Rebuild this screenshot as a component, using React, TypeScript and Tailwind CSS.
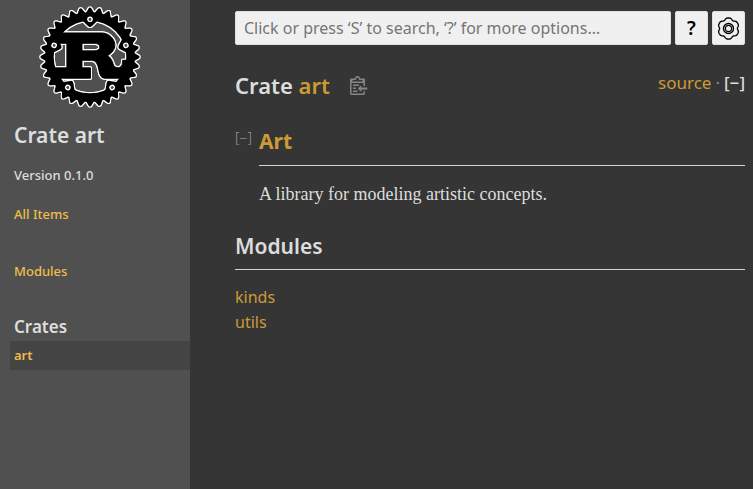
import React from "react";

const COG_ANGLES = Array.from({ length: 32 }, (_, i) => i * 11.25);
const MOUNT_ANGLES = [0, 72, 144, 216, 288];

function RustLogo() {
  return (
    <svg
      viewBox="0 0 106 106"
      role="img"
      aria-label="logo"
      className="block size-[100px] overflow-visible [filter:drop-shadow(1px_0_0_#fff)_drop-shadow(0_1px_0_#fff)_drop-shadow(-1px_0_0_#fff)_drop-shadow(0_-1px_0_#fff)]"
    >
      <mask id="holes" maskUnits="userSpaceOnUse" x="-60" y="-60" width="120" height="120">
        <rect x="-60" y="-60" width="120" height="120" fill="white" />
        {MOUNT_ANGLES.map((a) => (
          <circle key={a} cy="-40" r="3" transform={`rotate(${a})`} />
        ))}
      </mask>
      <g transform="translate(53 53)" stroke="black" strokeLinejoin="round">
        <path
          transform="translate(0.5 0.5)"
          d="M-9-15H4C12-15 12-7 4-7H-9ZM-40 22H0V11H-9V3H1C12 3 6 22 15 22H40V3H34V5C34 13 25 12 24 7C23 2 19-2 18-2C33-10 24-26 12-26H-35V-15H-25V11H-40Z"
        />
        <g mask="url(#holes)">
          <circle r="43" fill="none" strokeWidth="9" />
          {COG_ANGLES.map((a) => (
            <polygon key={a} strokeWidth="3" points="46,3 51,0 46,-3" transform={`rotate(${a})`} />
          ))}
          {MOUNT_ANGLES.map((a) => (
            <polygon key={a} strokeWidth="6" points="-7,-42 0,-35 7,-42" transform={`rotate(${a})`} />
          ))}
        </g>
      </g>
    </svg>
  );
}

const GEAR_POINTS = Array.from({ length: 120 }, (_, i) => {
  const t = (i * Math.PI) / 60;
  const r = 9.5 + 0.8 * Math.cos(6 * t) - 0.2 * Math.cos(12 * t);
  return `${(r * Math.sin(t)).toFixed(2)},${(-r * Math.cos(t)).toFixed(2)}`;
}).join(" ");

function GearIcon() {
  return (
    <svg viewBox="-11 -11 22 22" aria-hidden="true" className="size-[23px]" fill="none" stroke="black">
      <polygon points={GEAR_POINTS} strokeWidth="1.3" strokeLinejoin="round" />
      <circle r="4.8" strokeWidth="1.3" />
      <circle r="3" strokeWidth="1.2" />
    </svg>
  );
}

function ClipboardIcon() {
  return (
    <svg viewBox="0 0 24 25" aria-hidden="true" className="h-[19px] w-[18px]" fill="#858585">
      <path d="M18 20h2v3c0 1-1 2-2 2H2c-.998 0-2-1-2-2V5c0-.911.755-1.667 1.667-1.667h5A3.323 3.323 0 0110 0a3.323 3.323 0 013.333 3.333h5C19.245 3.333 20 4.09 20 5v8.333h-2V9H2v14h16v-3zM3 7h14c0-.911-.793-1.667-1.75-1.667H13.5c-.957 0-1.75-.755-1.75-1.666C11.75 2.755 10.957 2 10 2s-1.75.755-1.75 1.667c0 .911-.793 1.666-1.75 1.666H4.75C3.793 5.333 3 6.09 3 7z" />
      <path d="M4 19h6v2H4zM12 11H4v2h8zM4 17h4v-2H4zM15 15v-3l-4.5 4.5L15 21v-3l8.027-.032L23 15z" />
    </svg>
  );
}

function Sidebar() {
  return (
    <nav className="w-[190px] shrink-0 bg-[#505050] pl-[10px] text-[13px] leading-4 font-medium">
      <a href="#crate" className="mt-[7px] ml-[30px] block w-[100px]">
        <RustLogo />
      </a>
      <h2 className="mt-3 pl-1 text-[21px] leading-8 font-semibold">Crate art</h2>
      <div className="mt-4 pl-1">Version 0.1.0</div>
      <a href="#all" className="mt-[23px] block pl-1 text-[#eebd4c]">All Items</a>
      <a href="#modules" className="mt-[41px] block pl-1 text-[#eebd4c]">Modules</a>
      <h3 className="mt-9 pl-1 text-[17px] leading-6 font-semibold">Crates</h3>
      <a href="#crate" className="mt-[2px] block bg-[#444] pt-[6px] pb-[7px] pl-1 font-semibold text-[#eebd4c]">art</a>
    </nav>
  );
}

export default function App() {
  return (
    <div className="flex min-h-screen bg-[#353535] font-['Noto_Sans',sans-serif] text-[#ddd]">
      <Sidebar />
      <main className="min-w-0 flex-1 pt-[11px] pr-2 pl-[45px]">
        <form className="flex gap-1" onSubmit={(e) => e.preventDefault()}>
          <input
            type="search"
            aria-label="Search the documentation"
            placeholder="Click or press ‘S’ to search, ‘?’ for more options…"
            className="h-[34px] min-w-0 flex-1 rounded-[2px] border border-[#e0e0e0] bg-[#f0f0f0] px-2 text-[16px] text-[#111] placeholder:text-[#757575]"
          />
          <button type="button" aria-label="Help" className="h-[34px] w-[33px] rounded-[2px] border border-[#e0e0e0] bg-[#f0f0f0] text-[19px] leading-8 font-semibold text-black">
            ?
          </button>
          <button type="button" aria-label="Settings" className="flex h-[34px] w-[33px] items-center justify-center rounded-[2px] border border-[#e0e0e0] bg-[#f0f0f0]">
            <GearIcon />
          </button>
        </form>

        <div id="crate" className="mt-6 flex items-start justify-between">
          <h1 className="flex items-center text-[22px] leading-8 font-semibold">
            <span>
              Crate <a href="#crate" className="text-[#cb9b36]">art</a>
            </span>
            <button type="button" aria-label="Copy item path" className="ml-5">
              <ClipboardIcon />
            </button>
          </h1>
          <div className="flex items-center gap-1 text-[17px] leading-7">
            <a href="#source" className="text-[#cb9b36]">source</a>
            <span className="text-[#888]">·</span>
            <button type="button" aria-label="Collapse all docs" className="font-medium">[−]</button>
          </div>
        </div>

        <details open className="mt-6">
          <summary className="flex list-none items-start">
            <span className="w-6 text-[14px] leading-[26px] font-light text-[#999]">[−]</span>
            <h2 className="flex-1 border-b border-[#d2d2d2] pb-2 text-[21px] leading-8 font-bold">
              <a href="#art" className="text-[#cb9b36]">Art</a>
            </h2>
          </summary>
          <p className="mt-4 pl-6 font-['Liberation_Serif',serif] text-[18px] leading-6">
            A library for modeling artistic concepts.
          </p>
        </details>

        <h2 id="modules" className="mt-6 border-b border-[#d2d2d2] pb-[7px] text-[21px] leading-8 font-semibold">
          Modules
        </h2>
        <ul className="mt-[15px] text-[16px] leading-[25px]">
          <li><a href="#kinds" className="text-[#cb9b36]">kinds</a></li>
          <li><a href="#utils" className="text-[#cb9b36]">utils</a></li>
        </ul>
      </main>
    </div>
  );
}
